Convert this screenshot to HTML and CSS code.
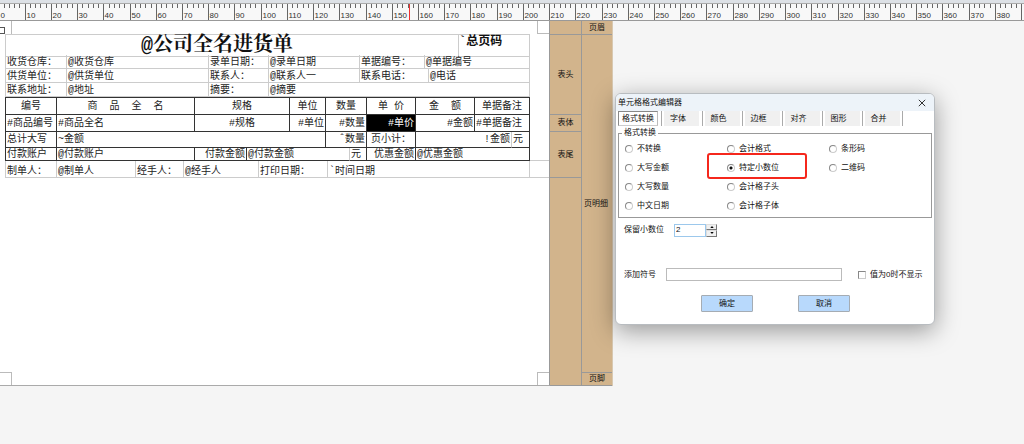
FILE: index.html
```html
<!DOCTYPE html>
<html lang="zh-CN">
<head>
<meta charset="utf-8">
<title>单元格格式编辑器</title>
<link rel="stylesheet" href="styles.css">
</head>
<body>
<div class="designer">
  <svg class="ruler" id="ruler" aria-hidden="true"></svg>

  <main class="workspace">
    <section class="paper">
      <div class="report">
        <div class="row title-row">
          <h1 class="title">@公司全名进货单</h1>
          <div class="page-total">`总页码</div>
        </div>
        <div class="row info-row">
          <span>收货仓库：</span><span>@收货仓库</span><span>录单日期：</span><span>@录单日期</span><span>单据编号：</span><span>@单据编号</span>
        </div>
        <div class="row info-row phone">
          <span>供货单位：</span><span>@供货单位</span><span>联系人：</span><span>@联系人一</span><span>联系电话：</span><span>@电话</span>
        </div>
        <div class="row info-row address">
          <span>联系地址：</span><span>@地址</span><span>摘要：</span><span>@摘要</span>
        </div>
        <table class="grid">
          <colgroup>
            <col class="c-no"><col class="c-name"><col class="c-pay"><col class="c-spec"><col class="c-unit"><col class="c-qty"><col class="c-yuan"><col class="c-price"><col class="c-sum"><col class="c-note"><col class="c-end">
          </colgroup>
          <thead>
            <tr><th>编号</th><th>商  品  全  名</th><th colspan="2">规格</th><th>单位</th><th colspan="2">数量</th><th>单 价</th><th>金  额</th><th colspan="2">单据备注</th></tr>
          </thead>
          <tbody>
            <tr><td>#商品编号</td><td>#商品全名</td><td class="mid" colspan="2">#规格</td><td class="num">#单位</td><td class="num" colspan="2">#数量</td><td class="num selected">#单价</td><td class="num">#金额</td><td colspan="2">#单据备注</td></tr>
            <tr class="totals"><td>总计大写</td><td colspan="4">~金额</td><td class="num" colspan="2">ˆ数量</td><td class="mid">页小计：</td><td class="num soft" colspan="2">!金额</td><td>元</td></tr>
            <tr class="short"><td>付款账户</td><td>@付款账户</td><td class="num">付款金额</td><td class="soft" colspan="3">@付款金额</td><td>元</td><td class="num">优惠金额</td><td colspan="3">@优惠金额</td></tr>
          </tbody>
        </table>
        <div class="row sign-row">
          <span>制单人：</span><span>@制单人</span><span>经手人：</span><span>@经手人</span><span>打印日期：</span><span>`时间日期</span>
        </div>
      </div>
      <i class="corner top-left"></i><i class="corner top-right"></i><i class="corner bottom-left"></i><i class="corner bottom-right"></i><i class="handle"></i>
      <i class="foot-guide"></i>
    </section>

    <aside class="bands inner">
      <div class="b-margin"></div><div class="b-head">表头</div><div class="b-body">表体</div><div class="b-tail">表尾</div><div class="b-rest"></div>
    </aside>
    <aside class="bands outer">
      <div class="b-margin">页眉</div><div class="b-rest">页明细</div><div class="b-foot">页脚</div>
    </aside>
  </main>

  <form class="dialog" role="dialog" aria-labelledby="dialog-title">
    <header class="dialog-bar">
      <h2 id="dialog-title">单元格格式编辑器</h2>
      <button type="button" class="close" aria-label="关闭"><svg viewBox="0 0 8 8"><path d="M.8.8 7.2 7.2M7.2.8.8 7.2"/></svg></button>
    </header>
    <nav class="tabs">
      <button type="button" class="active">格式转换</button><button type="button">字体</button><button type="button">颜色</button><button type="button">边框</button><button type="button">对齐</button><button type="button">图形</button><button type="button">合并</button>
    </nav>
    <fieldset class="formats">
      <legend>格式转换</legend>
      <label><input type="radio" name="format">不转换</label>
      <label><input type="radio" name="format">会计格式</label>
      <label><input type="radio" name="format">条形码</label>
      <label><input type="radio" name="format">大写金额</label>
      <label class="marked"><input type="radio" name="format" checked>特定小数位</label>
      <label><input type="radio" name="format">二维码</label>
      <label><input type="radio" name="format">大写数量</label>
      <label><input type="radio" name="format">会计格子头</label>
      <label class="first"><input type="radio" name="format">中文日期</label>
      <label><input type="radio" name="format">会计格子体</label>
    </fieldset>
    <div class="field decimals">
      <label for="decimals">保留小数位</label>
      <div class="spinner">
        <input id="decimals" type="text" value="2">
        <div class="steps">
          <button type="button" aria-label="增加"><svg viewBox="0 0 5 3"><path d="M0 3 2.5 0 5 3z"/></svg></button>
          <button type="button" aria-label="减少"><svg viewBox="0 0 5 3"><path d="M0 0 2.5 3 5 0z"/></svg></button>
        </div>
      </div>
    </div>
    <div class="field symbol">
      <label for="symbol">添加符号</label>
      <input id="symbol" type="text">
      <label class="check"><input type="checkbox">值为0时不显示</label>
    </div>
    <footer class="actions">
      <button type="submit">确定</button>
      <button type="button">取消</button>
    </footer>
  </form>
</div>
<script src="ruler.js"></script>
</body>
</html>
```
FILE: styles.css
```css
*, *::after { box-sizing: border-box; }

body {
  margin: 0;
  background: #f5f5f5;
  color: #111;
  font: 8px/12px "Liberation Sans", "Noto Sans CJK SC", sans-serif;
}

button, input { font: inherit; color: inherit; margin: 0; padding: 0; }

.designer {
  position: relative;
  min-height: 100vh;
  overflow: hidden;
}

/* Ruler */
.ruler {
  display: block;
  width: 100%;
  height: 21px;
  background: #f8f8f8;
  border-top: 3px solid #dde1e6;
  border-bottom: 1px solid #999;
}
.ruler line { stroke: #666; }
.ruler .edge { stroke: #aaa; }
.ruler .cursor { stroke: #f03030; }
.ruler text { fill: #333; font-size: 8px; }

/* Paper and report */
.workspace { display: flex; }

.paper {
  position: relative;
  flex: 0 0 550px;
  height: 365px;
  padding: 13px 19px 0 5px;
  background: #fff;
  border-right: 1px solid #999;
  border-bottom: 1px solid #aaa;
}

.report {
  font: 10px/13px "Liberation Mono", "Noto Sans CJK SC", monospace;
  color: #222;
  border-top: 1px solid #ccc;
  border-left: 1px solid #ccc;
}

.row { display: grid; }
.row > * { border-right: 1px solid #ccc; border-bottom: 1px solid #ccc; }
.row span { padding-left: 1px; overflow: hidden; white-space: nowrap; }

.title-row { grid-template-columns: 1fr 71px; height: 20px; color: #111; }
.title {
  margin: 0;
  padding-right: 30px;
  font: 700 20px/21px "Liberation Mono", "Noto Serif CJK SC", "Noto Sans CJK SC", serif;
  text-align: center;
}
.page-total { font-size: 12px; line-height: 15px; font-weight: 700; }

.info-row { grid-template-columns: 61px 142px 60px 91px 65px 1fr; height: 14px; line-height: 16px; }
.info-row.phone { grid-template-columns: 61px 142px 60px 91px 69px 1fr; }
.info-row.address { grid-template-columns: 61px 142px 60px 1fr; }

.grid {
  width: calc(100% + 1px);
  margin-left: -1px;
  table-layout: fixed;
  border-spacing: 0;
  border-top: 1px solid #333;
  border-left: 1px solid #333;
}
.grid th, .grid td {
  height: 17px;
  padding: 0 1px;
  border-right: 1px solid #333;
  border-bottom: 1px solid #333;
  font-weight: 400;
  text-align: left;
  white-space: pre;
}
.grid th, .grid .mid { text-align: center; }
.grid .num { text-align: right; }
.grid .soft { border-right-color: #ccc; }
.grid .totals td { height: 16px; }
.grid .short td { height: 13px; padding-top: 2px; line-height: 10px; }
.grid .selected { background: #000; color: #fff; }
.c-no { width: 51px; }
.c-name { width: 138px; }
.c-pay { width: 52px; }
.c-spec { width: 43px; }
.c-unit { width: 36px; }
.c-qty { width: 24px; }
.c-yuan { width: 17px; }
.c-price { width: 49px; }
.c-sum { width: 59px; }
.c-note { width: 37px; }

.sign-row {
  grid-template-columns: 51px 79px 48px 75px 69px 1fr;
  height: 17px;
  line-height: 21px;
}

.corner { position: absolute; width: 12px; height: 13px; border: 0 solid #bbb; }
.top-left { top: 0; left: 0; border-right-width: 1px; }
.top-right { top: 0; right: 0; border-width: 0 0 1px 1px; }
.bottom-left { bottom: 0; left: 0; border-width: 1px 1px 0 0; }
.bottom-right { bottom: 0; right: 0; border-width: 1px 0 0 1px; }
.handle {
  position: absolute;
  top: 6px;
  left: 0;
  width: 5px;
  height: 7px;
  border: 1px solid #555;
  border-left: 0;
}
.foot-guide {
  position: absolute;
  top: 139px;
  right: 0;
  width: 19px;
  height: 18px;
  border: 1px solid #ccc;
  border-width: 1px 0;
}

/* Section bands */
.bands {
  display: flex;
  flex-direction: column;
  width: 32px;
  height: 365px;
  background: #d2b48c;
  border-right: 1px solid #999;
}
.bands.outer { width: 31px; border-right-color: #d8c8b0; }
.bands div {
  display: flex;
  align-items: center;
  justify-content: center;
  border-bottom: 1px solid #999;
  white-space: nowrap;
}
.b-margin { height: 14px; }
.b-head { height: 80px; }
.b-body { height: 17px; }
.b-tail { height: 46px; }
.b-rest { flex: 1; }
.b-foot { height: 13px; }
.outer .b-rest { padding-right: 2px; }

/* Dialog */
.dialog {
  position: absolute;
  top: 93px;
  left: 615px;
  width: 320px;
  background: #fff;
  border: 1px solid #b8bcc0;
  border-radius: 6px;
  box-shadow: 0 6px 24px rgba(0, 0, 0, .38);
  overflow: hidden;
}
.dialog-bar {
  display: flex;
  align-items: center;
  justify-content: space-between;
  height: 17px;
  padding: 0 8px 0 2px;
  background: #edf3f9;
}
.dialog-bar h2 { margin: 0; font-size: 8px; font-weight: 400; }
.close { width: 8px; height: 12px; border: 0; background: none; display: flex; align-items: center; }
.close svg { width: 8px; height: 8px; fill: none; stroke: #333; }

.tabs { display: flex; height: 15px; padding-left: 2px; }
.tabs button {
  width: 40px;
  padding-right: 8px;
  background: linear-gradient(to right, #fff 2px, #f0f0f0 2px 37px, #fff 37px);
  border: 0;
  border-right: 1px solid #aaa;
  line-height: 13px;
}
.tabs .active {
  margin-right: 4px;
  padding-right: 0;
  background: #fff;
  border: 1px solid #888;
  border-right-color: #bbb;
  border-bottom-color: #ccc;
}
.tabs .active + button { width: 41px; box-shadow: -1px 0 #aaa; }

.formats {
  display: grid;
  grid-template-columns: 102px 102px 1fr;
  grid-auto-rows: 19px;
  align-items: center;
  height: 91px;
  margin: 1px 2px 0;
  padding: 0 0 0 6px;
  border: 1px solid #999;
}
.formats legend { margin-left: -3px; padding: 0 2px; line-height: 12px; }
.formats label, .check { display: flex; align-items: center; gap: 4px; position: relative; }
.formats .first { grid-column: 1; }

input[type="radio"], input[type="checkbox"] {
  appearance: none;
  width: 8px;
  height: 8px;
  background: #fff;
  border: 1px solid #888;
}
input[type="radio"] { border-radius: 50%; border-right-color: #ccc; border-bottom-color: #ccc; }
input[type="radio"]:checked { background: radial-gradient(circle, #111 0 1px, #fff 2px); }
input[type="checkbox"] { border-right-color: #ccc; border-bottom-color: #ccc; }

.marked::after {
  content: "";
  position: absolute;
  top: -9px;
  left: -20px;
  width: 100px;
  height: 26px;
  border: 2px solid #f5271c;
  border-radius: 3px;
}

.field { display: flex; align-items: center; padding-left: 8px; }
.decimals { height: 14px; margin-top: 5px; gap: 9px; }
.decimals > label { width: 41px; }
.spinner { display: flex; height: 13px; }
.spinner input { width: 32px; border: 1px solid #9cc8ec; padding-left: 1px; outline: 0; }
.steps { display: flex; flex-direction: column; width: 11px; }
.steps button {
  flex: 1;
  display: flex;
  align-items: center;
  justify-content: center;
  min-height: 0;
  background: #f0f0f0;
  border: 1px solid #777;
  border-top-color: #ddd;
  border-left-color: #ddd;
}
.steps svg { width: 4px; height: 2px; }

.symbol { margin-top: 31px; gap: 8px; }
.symbol > label:first-child { width: 34px; }
.symbol > input { width: 176px; height: 13px; border: 1px solid #bbb; }
.check { margin-left: 8px; }

.actions { display: flex; gap: 45px; padding: 14px 0 12px 85px; }
.actions button {
  width: 52px;
  height: 17px;
  background: #b8d9fc;
  border: 1px solid #a5acb3;
  border-radius: 1px;
}
```
FILE: ruler.js
```js
const ruler = document.getElementById('ruler');
const UNIT = 26.22;
const START = -1.5;
const LABEL_WIDTH = 14;

function add(name, attrs, text) {
  const node = document.createElementNS('http://www.w3.org/2000/svg', name);
  for (const key in attrs) node.setAttribute(key, attrs[key]);
  if (text) node.textContent = text;
  ruler.appendChild(node);
}

add('line', { class: 'edge', x1: 0, x2: '100%', y1: 0.5, y2: 0.5 });
for (let i = 0; START + i * UNIT < window.innerWidth; i++) {
  const x = Math.round(START + i * UNIT) + 0.5;
  add('line', { x1: x, x2: x, y1: 1, y2: 17 });
  if (x + LABEL_WIDTH < window.innerWidth) {
    add('text', { x: x + 1, y: 15 }, String(i * 10));
  }
  for (let k = 1; k < 5; k++) {
    const t = Math.round(START + (i + k / 5) * UNIT) + 0.5;
    add('line', { x1: t, x2: t, y1: 1, y2: 5 });
  }
}
add('line', { class: 'cursor', x1: 409.5, x2: 409.5, y1: 1, y2: 17 });
```
